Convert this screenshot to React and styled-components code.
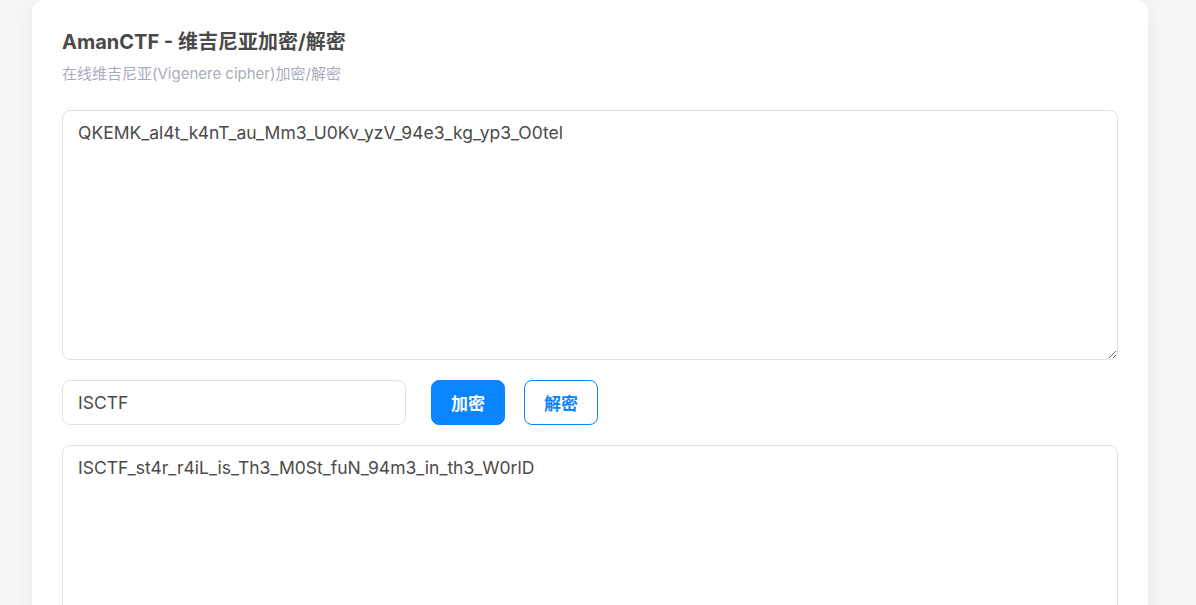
import styled, { createGlobalStyle } from "styled-components";

const GlobalStyle = createGlobalStyle`
  * {
    box-sizing: border-box;
  }

  body {
    margin: 0;
    background: #f6f7f9;
    font-family: Inter, "Noto Sans CJK SC", sans-serif;
    overflow: hidden;
  }
`;

const Page = styled.div`
  height: 605px;
  padding: 0 48px 0 32px;
`;

const Card = styled.main`
  background: #ffffff;
  border-radius: 12px;
  box-shadow: 0 0 24px rgba(0, 0, 0, 0.06);
  padding: 30px 30px 40px;
  min-height: 700px;
`;

const Title = styled.h1`
  margin: 0;
  font-size: 20px;
  line-height: 24px;
  font-weight: 700;
  color: #4a4a4a;
`;

const Subtitle = styled.p`
  margin: 10px 0 0;
  font-size: 15px;
  line-height: 20px;
  color: #a9abbc;
`;

const TextBox = styled.textarea`
  display: block;
  width: 100%;
  height: ${(p) => p.$height}px;
  margin-top: ${(p) => p.$top}px;
  padding: 10px 15px;
  border: 1px solid #dfe1e6;
  border-radius: 8px;
  font-family: Inter, "Noto Sans CJK SC", sans-serif;
  font-size: 17.5px;
  line-height: 24px;
  color: #4a4a4a;
  resize: vertical;
  outline: none;
`;

const KeyRow = styled.div`
  display: flex;
  align-items: center;
  margin-top: 20px;
`;

const KeyInput = styled.input`
  width: 344px;
  height: 45px;
  padding: 0 15px;
  border: 1px solid #dfe1e6;
  border-radius: 8px;
  font-family: Inter, "Noto Sans CJK SC", sans-serif;
  font-size: 17.5px;
  color: #4a4a4a;
  outline: none;
`;

const Button = styled.button`
  width: 74px;
  height: 45px;
  margin-left: ${(p) => p.$gap}px;
  border-radius: 8px;
  border: 1px solid #0a84ff;
  background: ${(p) => (p.$primary ? "#0a84ff" : "#ffffff")};
  color: ${(p) => (p.$primary ? "#ffffff" : "#0a84ff")};
  font-family: "Noto Sans CJK SC", Inter, sans-serif;
  font-size: 17px;
  font-weight: 700;
  cursor: pointer;
`;

export default function App() {
  return (
    <>
      <GlobalStyle />
      <Page>
        <Card>
          <Title>AmanCTF - 维吉尼亚加密/解密</Title>
          <Subtitle>在线维吉尼亚(Vigenere cipher)加密/解密</Subtitle>
          <TextBox
            $top={26}
            $height={250}
            defaultValue="QKEMK_al4t_k4nT_au_Mm3_U0Kv_yzV_94e3_kg_yp3_O0tel"
          />
          <KeyRow>
            <KeyInput defaultValue="ISCTF" />
            <Button $primary $gap={25}>加密</Button>
            <Button $gap={19}>解密</Button>
          </KeyRow>
          <TextBox
            $top={20}
            $height={250}
            defaultValue="ISCTF_st4r_r4iL_is_Th3_M0St_fuN_94m3_in_th3_W0rlD"
          />
        </Card>
      </Page>
    </>
  );
}
